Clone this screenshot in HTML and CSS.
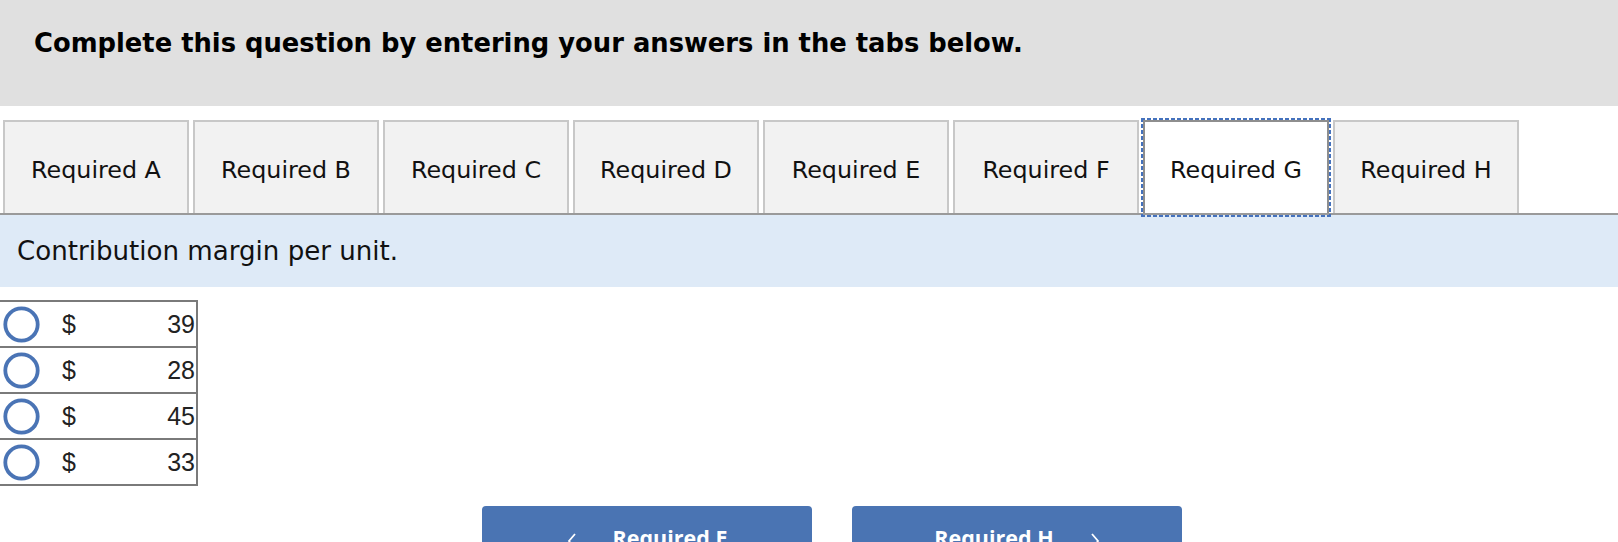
FILE: index.html
```html
<!DOCTYPE html>
<html>
<head>
<meta charset="utf-8">
<link rel="stylesheet" href="styles.css">
</head>
<body>
<div class="header">Complete this question by entering your answers in the tabs below.</div>
<div class="tabs">
  <div class="tab">Required A</div>
  <div class="tab">Required B</div>
  <div class="tab">Required C</div>
  <div class="tab">Required D</div>
  <div class="tab">Required E</div>
  <div class="tab">Required F</div>
  <div class="tab active">Required G</div>
  <div class="tab">Required H</div>
</div>
<div class="prompt">Contribution margin per unit.</div>
<div class="choices">
  <div class="row"><span class="radio"><svg width="37" height="37" viewBox="0 0 37 37"><circle cx="18.5" cy="18.5" r="16.2" fill="none" stroke="#4a74b5" stroke-width="3.8"/></svg></span><span class="cur">$</span><span class="num">39</span></div>
  <div class="row"><span class="radio"><svg width="37" height="37" viewBox="0 0 37 37"><circle cx="18.5" cy="18.5" r="16.2" fill="none" stroke="#4a74b5" stroke-width="3.8"/></svg></span><span class="cur">$</span><span class="num">28</span></div>
  <div class="row"><span class="radio"><svg width="37" height="37" viewBox="0 0 37 37"><circle cx="18.5" cy="18.5" r="16.2" fill="none" stroke="#4a74b5" stroke-width="3.8"/></svg></span><span class="cur">$</span><span class="num">45</span></div>
  <div class="row"><span class="radio"><svg width="37" height="37" viewBox="0 0 37 37"><circle cx="18.5" cy="18.5" r="16.2" fill="none" stroke="#4a74b5" stroke-width="3.8"/></svg></span><span class="cur">$</span><span class="num">33</span></div>
</div>
<div class="nav">
  <div class="btn"><svg class="chev" width="10" height="20" viewBox="0 0 10 20"><polyline points="8,3 2,10 8,17" fill="none" stroke="#fff" stroke-width="1.8"/></svg><span>Required E</span></div>
  <div class="btn"><span>Required H</span><svg class="chev" width="10" height="20" viewBox="0 0 10 20"><polyline points="2,3 8,10 2,17" fill="none" stroke="#fff" stroke-width="1.8"/></svg></div>
</div>
</body>
</html>
```
FILE: styles.css
```css
html, body {
  margin: 0;
  padding: 0;
  background: #fff;
  overflow: hidden;
}
body {
  font-family: "DejaVu Sans", Verdana, sans-serif;
  color: #111;
}
.header {
  background: #e0e0e0;
  height: 106px;
  box-sizing: border-box;
  padding: 28px 0 0 34px;
  font-weight: bold;
  font-size: 25.8px;
  line-height: 30px;
  color: #000;
}
.tabs {
  display: flex;
  gap: 4px;
  margin-top: 14px;
  padding-left: 3px;
  border-bottom: 2px solid #9a9a9a;
}
.tab {
  width: 186px;
  height: 93px;
  box-sizing: border-box;
  border: 2px solid #c8c8c8;
  border-bottom: none;
  background: #f2f2f2;
  display: flex;
  align-items: center;
  justify-content: center;
  padding-top: 5px;
  font-size: 23.8px;
  color: #111;
}
.tab.active {
  position: relative;
  background: #fff;
  border-color: #8e8e8e;
}
.tab.active::after {
  content: "";
  position: absolute;
  top: -4px;
  left: -4px;
  right: -4px;
  bottom: -4px;
  pointer-events: none;
  background:
    repeating-linear-gradient(90deg, #4572bd 0 4px, transparent 4px 6px) top left / 100% 2px no-repeat,
    repeating-linear-gradient(90deg, #4572bd 0 4px, transparent 4px 6px) bottom left / 100% 2px no-repeat,
    repeating-linear-gradient(180deg, #4572bd 0 4px, transparent 4px 6px) top left / 2px 100% no-repeat,
    repeating-linear-gradient(180deg, #4572bd 0 4px, transparent 4px 6px) top right / 2px 100% no-repeat;
}
.prompt {
  background: #deeaf7;
  height: 72px;
  box-sizing: border-box;
  display: flex;
  align-items: center;
  padding-left: 17px;
  font-size: 26.1px;
  color: #111;
}
.choices {
  margin-top: 13px;
  width: 198px;
  box-sizing: border-box;
  border-top: 2px solid #7a7a7a;
  border-right: 2px solid #7a7a7a;
  font-family: "Liberation Sans", Arial, sans-serif;
  font-size: 25px;
  color: #222;
}
.row {
  display: flex;
  align-items: center;
  height: 46px;
  box-sizing: border-box;
  border-bottom: 2px solid #7a7a7a;
}
.radio {
  width: 37px;
  height: 37px;
  margin-left: 3px;
  display: flex;
}
.cur {
  margin-left: 22px;
}
.num {
  margin-left: auto;
  padding-right: 1px;
}
.nav {
  display: flex;
  gap: 40px;
  padding-left: 482px;
  margin-top: 20px;
}
.btn {
  width: 330px;
  height: 60px;
  background: #4a74b3;
  border-radius: 4px 4px 0 0;
  display: flex;
  justify-content: center;
  align-items: flex-start;
  gap: 36px;
  padding-top: 18px;
  box-sizing: border-box;
  color: #fff;
  font-family: "Open Sans", sans-serif;
  font-weight: 700;
  font-size: 21.5px;
  line-height: 28px;
}
.chev {
  margin-top: 7px;
}
```
